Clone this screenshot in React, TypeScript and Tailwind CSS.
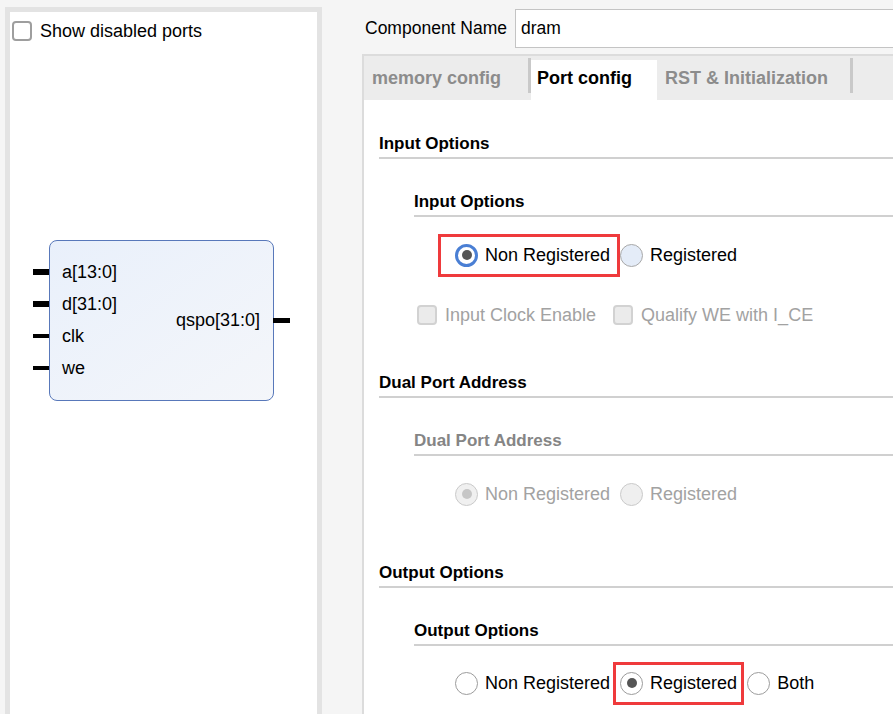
type RadioKind = "focused" | "hover" | "plain" | "plainOn" | "disabledOn" | "disabledOff";

function Radio({ kind }: { kind: RadioKind }) {
  if (kind === "focused") {
    return (
      <span className="flex h-[23px] w-[23px] shrink-0 items-center justify-center rounded-full border-[3px] border-[#4a7fd4] bg-white">
        <span className="h-[10px] w-[10px] rounded-full bg-[#555]" />
      </span>
    );
  }
  const styles: Record<string, string> = {
    hover: "border-[#a8a8a8] bg-[#e4ecf8]",
    plain: "border-[#9c9c9c] bg-white",
    plainOn: "border-[#9c9c9c] bg-white",
    disabledOn: "border-[#cacaca] bg-[#f0f0f0]",
    disabledOff: "border-[#cacaca] bg-[#efefef]",
  };
  return (
    <span className={`flex h-[23px] w-[23px] shrink-0 items-center justify-center rounded-full border-[1.5px] ${styles[kind]}`}>
      {kind === "plainOn" && <span className="h-[10px] w-[10px] rounded-full bg-[#555]" />}
      {kind === "disabledOn" && <span className="h-[10px] w-[10px] rounded-full bg-[#c6c6c6]" />}
    </span>
  );
}

function Option({
  kind,
  label,
  disabled,
  box,
}: {
  kind: RadioKind;
  label: string;
  disabled?: boolean;
  box?: "input" | "output";
}) {
  return (
    <div className="relative flex h-[23px] items-center gap-[7px] whitespace-nowrap">
      <Radio kind={kind} />
      <span className={disabled ? "text-[#a2a2a2]" : "text-black"}>{label}</span>
      {box === "input" && (
        <span className="absolute -top-[10px] -bottom-[10px] -left-[17px] -right-[10px] border-[3px] border-[#ef3a3c]" />
      )}
      {box === "output" && (
        <span className="absolute -top-[10px] -bottom-[10px] -left-[7px] -right-[7px] border-[3px] border-[#ef3a3c]" />
      )}
    </div>
  );
}

function Heading({ text, muted, className }: { text: string; muted?: boolean; className: string }) {
  return (
    <div className={className}>
      <div className={`h-[20px] text-[17px] font-bold leading-[20px] ${muted ? "text-[#858585]" : "text-black"}`}>
        {text}
      </div>
      <div className="mt-[3px] h-[2px] bg-[#d0d0d0]" />
    </div>
  );
}

function Pin({ label, bus }: { label: string; bus?: boolean }) {
  return (
    <div className="flex h-[32px] items-center">
      <span className={`-ml-[17px] w-[16px] bg-black ${bus ? "h-[6px]" : "h-[4px]"}`} />
      <span className="ml-[13px]">{label}</span>
    </div>
  );
}

function DisabledCheck({ label }: { label: string }) {
  return (
    <div className="flex items-center gap-[8px] whitespace-nowrap">
      <span className="h-[20px] w-[20px] rounded-[4px] border-[2px] border-[#d2d2d2] bg-[#ebebeb]" />
      <span className="text-[#a2a2a2]">{label}</span>
    </div>
  );
}

export default function App() {
  return (
    <div
      className="flex h-[714px] w-[893px] overflow-hidden bg-[#f5f5f5] text-[18px] text-black"
      style={{ fontFamily: '"Liberation Sans", Arial, sans-serif' }}
    >
      {/* left: symbol preview */}
      <div className="ml-[5px] mt-[7px] h-[720px] w-[317px] shrink-0 border-[5px] border-b-0 border-[#e3e3e3] bg-white">
        <div className="ml-[2px] mt-[9px] flex h-[20px] items-center gap-[8px] leading-[20px]">
          <span className="h-[20px] w-[20px] rounded-[4px] border-[2px] border-[#9e9e9e] bg-white" />
          <span>Show disabled ports</span>
        </div>
        <div className="ml-[39px] mt-[199px] flex items-center">
          <div className="flex h-[161px] w-[225px] items-center justify-between rounded-[8px] border border-[#5878ba] bg-gradient-to-br from-[#e9f0fb] to-[#f4f6fa] pr-[13px]">
            <div className="flex flex-col self-start pt-[15px]">
              <Pin label="a[13:0]" bus />
              <Pin label="d[31:0]" bus />
              <Pin label="clk" />
              <Pin label="we" />
            </div>
            <span>qspo[31:0]</span>
          </div>
          <span className="-ml-px h-[5px] w-[17px] bg-black" />
        </div>
      </div>

      {/* right: configuration */}
      <div className="flex min-w-0 flex-1 flex-col">
        <div className="ml-[43px] mt-[9px] flex items-center gap-[8px]">
          <span className="shrink-0 whitespace-nowrap text-[17.5px]">Component Name</span>
          <div className="flex h-[39px] w-[420px] shrink-0 items-center border border-[#c4c4c4] bg-white pl-[5px] text-[17.5px]">
            dram
          </div>
        </div>

        <div className="ml-[40px] mt-[6px] flex flex-1 flex-col border-l-2 border-t-2 border-[#dcdcdc] bg-white">
          <div className="flex h-[44px] items-stretch whitespace-nowrap bg-[#ececec] text-[18px] font-bold">
            <div className="flex items-center pl-[8px] pr-[27px] text-[#8c8c8c]">memory config</div>
            <span className="mt-[2px] h-[35px] w-[3px] self-start bg-[#c9c9c9]" />
            <div className="mt-[4px] flex items-center bg-white pb-[4px] pl-[6px] pr-[25px] text-black">Port config</div>
            <div className="flex items-center pl-[8px] pr-[22px] text-[#8c8c8c]">RST &amp; Initialization</div>
            <span className="mt-[2px] h-[35px] w-[3px] self-start bg-[#c9c9c9]" />
          </div>

          <div className="flex flex-col pl-[15px]">
            <Heading text="Input Options" className="mt-[34px]" />
            <div className="ml-[35px] flex flex-col">
              <Heading text="Input Options" className="mt-[33px]" />
              <div className="ml-[41px] mt-[17px] flex h-[42px] items-center gap-[10px]">
                <Option kind="focused" label="Non Registered" box="input" />
                <Option kind="hover" label="Registered" />
              </div>
              <div className="ml-[3px] mt-[28px] flex h-[22px] items-center gap-[17px]">
                <DisabledCheck label="Input Clock Enable" />
                <DisabledCheck label="Qualify WE with I_CE" />
              </div>
            </div>

            <Heading text="Dual Port Address" className="mt-[47px]" />
            <div className="ml-[35px] flex flex-col">
              <Heading text="Dual Port Address" muted className="mt-[33px]" />
              <div className="ml-[41px] mt-[17px] flex h-[42px] items-center gap-[10px]">
                <Option kind="disabledOn" label="Non Registered" disabled />
                <Option kind="disabledOff" label="Registered" disabled />
              </div>
            </div>

            <Heading text="Output Options" className="mt-[48px]" />
            <div className="ml-[35px] flex flex-col">
              <Heading text="Output Options" className="mt-[33px]" />
              <div className="ml-[41px] mt-[16px] flex h-[42px] items-center gap-[10px]">
                <Option kind="plain" label="Non Registered" />
                <Option kind="plainOn" label="Registered" box="output" />
                <Option kind="plain" label="Both" />
              </div>
            </div>
          </div>
        </div>
      </div>
    </div>
  );
}
